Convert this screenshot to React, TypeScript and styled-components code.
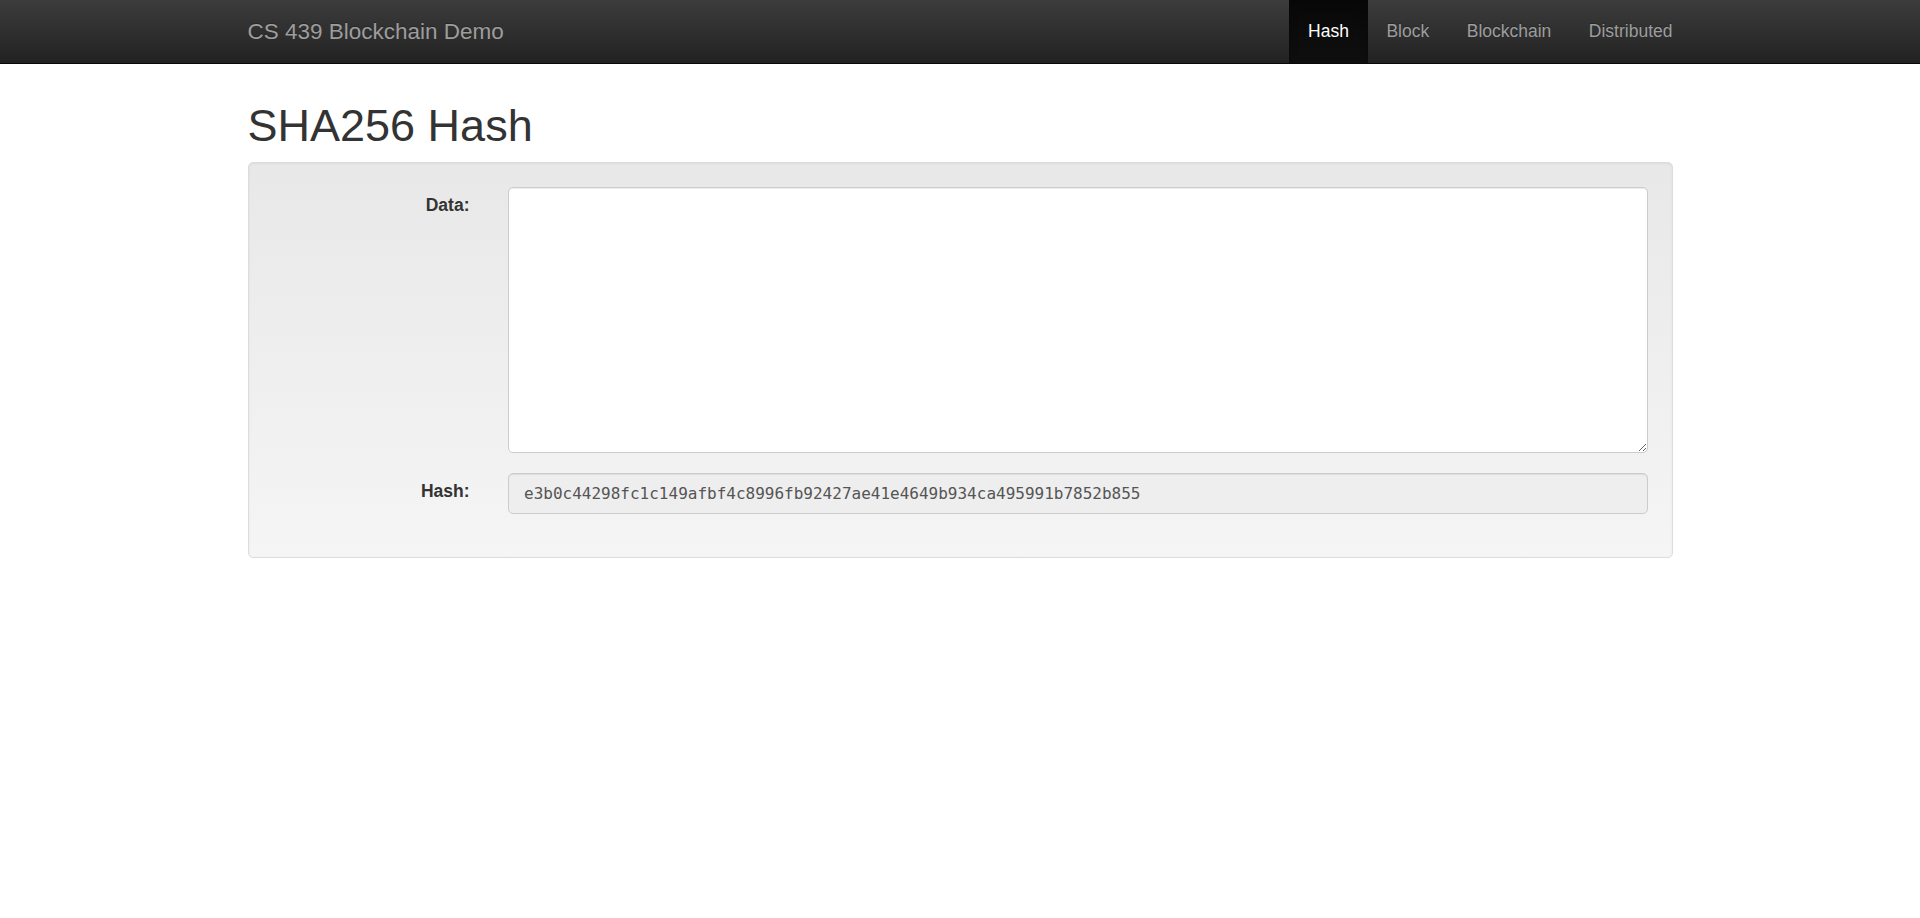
import React, { useState } from "react";
import styled, { createGlobalStyle } from "styled-components";

const GlobalStyle = createGlobalStyle`
  html, body { margin: 0; padding: 0; background: #fff; }
  body {
    font-family: "Liberation Sans", Arial, Helvetica, sans-serif;
    font-size: 17.5px;
    line-height: 25px;
    color: #333;
  }
  * { box-sizing: border-box; }
`;

const Navbar = styled.nav`
  height: 64px;
  background-image: linear-gradient(to bottom, #3c3c3c 0%, #222 100%);
  border-bottom: 1px solid #080808;
`;

const Container = styled.div`
  width: 1425px;
  margin: 0 auto;
`;

const NavInner = styled(Container)`
  display: flex;
  justify-content: space-between;
  align-items: stretch;
  height: 63px;
`;

const Brand = styled.a`
  display: block;
  font-size: 22.5px;
  line-height: 25px;
  padding: 19px 0;
  color: #9d9d9d;
  text-decoration: none;
  text-shadow: 0 -1px 0 rgba(0, 0, 0, 0.25);
`;

const NavList = styled.ul`
  display: flex;
  list-style: none;
  margin: 0 -18.75px 0 0;
  padding: 0;
`;

const NavLink = styled.a<{ $active?: boolean }>`
  display: block;
  padding: 19px 18.75px;
  line-height: 25px;
  font-size: 17.5px;
  text-decoration: none;
  color: ${(p) => (p.$active ? "#fff" : "#9d9d9d")};
  text-shadow: 0 -1px 0 rgba(0, 0, 0, 0.25);
  background-image: ${(p) =>
    p.$active ? "linear-gradient(to bottom, #080808 0%, #0f0f0f 100%)" : "none"};
  box-shadow: ${(p) => (p.$active ? "inset 0 3px 9px rgba(0,0,0,0.25)" : "none")};
`;

const Title = styled.h1`
  font-size: 45px;
  font-weight: 500;
  line-height: 49.5px;
  margin: 37px 0 11px;
  color: #333;
`;

const Well = styled.div`
  padding: 24px;
  border: 1px solid #dcdcdc;
  border-radius: 5px;
  background-image: linear-gradient(to bottom, #e8e8e8 0%, #f5f5f5 100%);
  box-shadow: inset 0 1px 3px rgba(0, 0, 0, 0.05), 0 1px 0 rgba(255, 255, 255, 0.1);
  display: flex;
  flex-direction: column;
  gap: 20px;
`;

const FormRow = styled.div<{ $last?: boolean }>`
  display: grid;
  grid-template-columns: 197px 1fr;
  column-gap: 38.5px;
  margin-bottom: ${(p) => (p.$last ? "19px" : "0")};
`;

const Label = styled.label`
  text-align: right;
  font-weight: bold;
  font-size: 17.5px;
  line-height: 25px;
  padding-top: 6px;
  color: #333;
`;

const TextArea = styled.textarea`
  display: block;
  width: 100%;
  height: 266px;
  padding: 7.5px 15px;
  font-family: "Liberation Sans", Arial, sans-serif;
  font-size: 17.5px;
  line-height: 25px;
  color: #555;
  background: #fff;
  border: 1px solid #ccc;
  border-radius: 5px;
  box-shadow: inset 0 1px 1px rgba(0, 0, 0, 0.075);
  outline: none;
  resize: vertical;
`;

const HashInput = styled.input`
  display: block;
  width: 100%;
  height: 41px;
  padding: 0 15px;
  font-family: "DejaVu Sans Mono", "Liberation Mono", monospace;
  font-size: 16px;
  color: #555;
  background: #eee;
  border: 1px solid #ccc;
  border-radius: 5px;
  box-shadow: inset 0 1px 1px rgba(0, 0, 0, 0.075);
  outline: none;
`;

const links = ["Hash", "Block", "Blockchain", "Distributed"];

export default function App() {
  const [data, setData] = useState("");
  return (
    <>
      <GlobalStyle />
      <Navbar>
        <NavInner>
          <Brand href="#">CS 439 Blockchain Demo</Brand>
          <NavList>
            {links.map((l) => (
              <li key={l}>
                <NavLink href="#" $active={l === "Hash"}>
                  {l}
                </NavLink>
              </li>
            ))}
          </NavList>
        </NavInner>
      </Navbar>
      <Container>
        <Title>SHA256 Hash</Title>
        <Well>
          <FormRow>
            <Label htmlFor="data">Data:</Label>
            <TextArea id="data" value={data} onChange={(e) => setData(e.target.value)} />
          </FormRow>
          <FormRow $last>
            <Label htmlFor="hash">Hash:</Label>
            <HashInput
              id="hash"
              readOnly
              value="e3b0c44298fc1c149afbf4c8996fb92427ae41e4649b934ca495991b7852b855"
            />
          </FormRow>
        </Well>
      </Container>
    </>
  );
}
